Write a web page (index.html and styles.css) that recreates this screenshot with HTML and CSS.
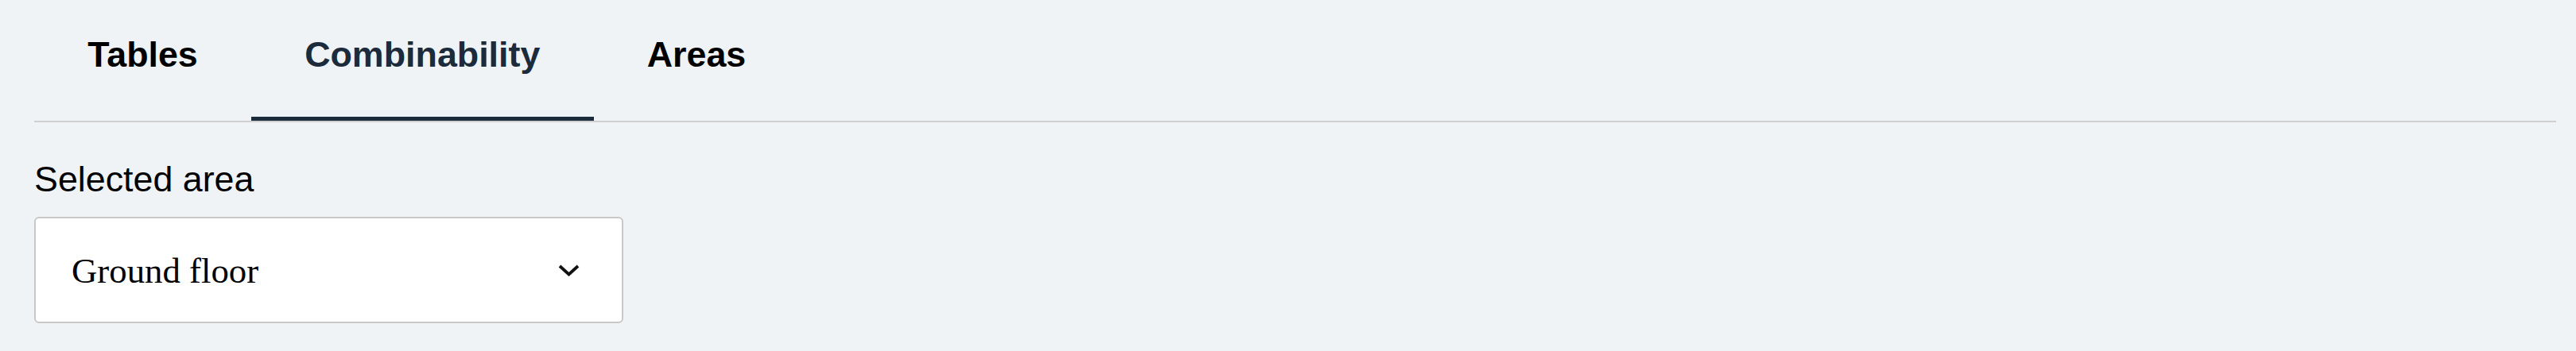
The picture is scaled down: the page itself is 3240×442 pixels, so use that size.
FILE: index.html
```html
<!DOCTYPE html>
<html lang="en">
<head>
<meta charset="utf-8">
<title>Combinability</title>
<link rel="stylesheet" href="styles.css">
</head>
<body>
<div class="page">
  <nav class="tabs">
    <div class="tab">Tables</div>
    <div class="tab tab-active">Combinability</div>
    <div class="tab">Areas</div>
  </nav>
  <div class="field">
    <label class="field-label">Selected area</label>
    <div class="select">
      <span class="select-value">Ground floor</span>
      <svg class="chevron" width="27" height="16" viewBox="0 0 27 16"><path d="M2 3 L13.5 13.5 L25 3" fill="none" stroke="#111" stroke-width="3.8"/></svg>
    </div>
  </div>
</div>
</body>
</html>
```

FILE: styles.css
```css
html, body {
  margin: 0;
  padding: 0;
  background: #eff3f6;
}
.page {
  padding: 0 25px 0 43px;
  font-family: "Liberation Sans", Arial, sans-serif;
  color: #000;
}
.tabs {
  display: flex;
  border-bottom: 2px solid #cfcfcf;
}
.tab {
  padding: 42.5px 67.2px 53px;
  font-size: 44.8px;
  line-height: 51.5px;
  font-weight: bold;
  border-bottom: 5px solid transparent;
  color: #000;
}
.tab-active {
  color: #1b2b3b;
  border-bottom-color: #1b2b3b;
}
.field {
  display: flex;
  flex-direction: column;
  align-items: flex-start;
  padding-top: 45.5px;
}
.field-label {
  font-size: 44.8px;
  line-height: 51.5px;
  margin-bottom: 22px;
}
.select {
  box-sizing: border-box;
  width: 741px;
  height: 134px;
  border: 2px solid #c8c8c8;
  border-radius: 6px;
  background: #fff;
  display: flex;
  align-items: center;
  justify-content: space-between;
  padding: 0 53px 0 45px;
}
.select-value {
  font-family: "Liberation Serif", "Times New Roman", serif;
  font-size: 44.8px;
  color: #000;
  position: relative;
  top: 1px;
}
.chevron {
  display: block;
}
```
